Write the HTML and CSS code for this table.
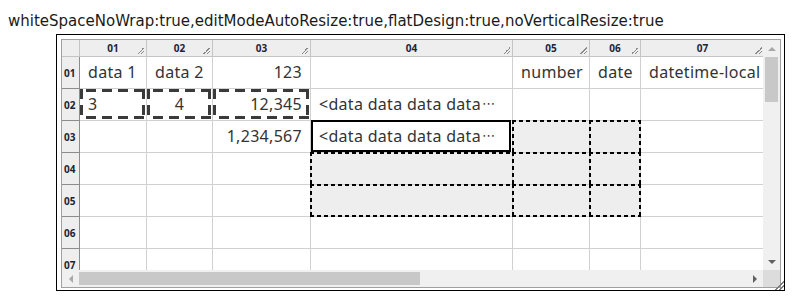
FILE: index.html
```html
<!DOCTYPE html>
<html>
<head>
<meta charset="utf-8">
<link rel="stylesheet" href="styles.css">
</head>
<body>
<div class="title">whiteSpaceNoWrap:true,editModeAutoResize:true,flatDesign:true,noVerticalResize:true</div>
<div class="frame">
  <div class="gridbox">
    <div class="top">
      <div class="viewport">
        <div class="sheet">
          <div class="ch"></div>
          <div class="ch grip">01</div>
          <div class="ch grip">02</div>
          <div class="ch grip">03</div>
          <div class="ch grip">04</div>
          <div class="ch grip">05</div>
          <div class="ch grip">06</div>
          <div class="ch grip">07</div>

          <div class="rh">01</div>
          <div class="c">data 1</div>
          <div class="c">data 2</div>
          <div class="c r">123</div>
          <div class="c"></div>
          <div class="c">number</div>
          <div class="c">date</div>
          <div class="c">datetime-local</div>

          <div class="rh">02</div>
          <div class="c copy">3</div>
          <div class="c m copy">4</div>
          <div class="c r copy">12,345</div>
          <div class="c">&lt;data data data data<span class="ell">⋯</span></div>
          <div class="c"></div>
          <div class="c"></div>
          <div class="c"></div>

          <div class="rh">03</div>
          <div class="c"></div>
          <div class="c"></div>
          <div class="c r">1,234,567</div>
          <div class="c active">&lt;data data data data<span class="ell">⋯</span></div>
          <div class="c sel"></div>
          <div class="c sel er"></div>
          <div class="c"></div>

          <div class="rh">04</div>
          <div class="c"></div>
          <div class="c"></div>
          <div class="c"></div>
          <div class="c sel"></div>
          <div class="c sel"></div>
          <div class="c sel er"></div>
          <div class="c"></div>

          <div class="rh">05</div>
          <div class="c"></div>
          <div class="c"></div>
          <div class="c"></div>
          <div class="c sel eb"></div>
          <div class="c sel eb"></div>
          <div class="c sel eb er"></div>
          <div class="c"></div>

          <div class="rh">06</div>
          <div class="c"></div>
          <div class="c"></div>
          <div class="c"></div>
          <div class="c"></div>
          <div class="c"></div>
          <div class="c"></div>
          <div class="c"></div>

          <div class="rh">07</div>
          <div class="c"></div>
          <div class="c"></div>
          <div class="c"></div>
          <div class="c"></div>
          <div class="c"></div>
          <div class="c"></div>
          <div class="c"></div>
        </div>
      </div>
      <div class="vscroll">
        <div class="btn"><span class="arrow up"></span></div>
        <div class="vtrack"><div class="vthumb"></div></div>
        <div class="btn"><span class="arrow down"></span></div>
      </div>
    </div>
    <div class="bottom">
      <div class="hscroll">
        <div class="btn"><span class="arrow left"></span></div>
        <div class="htrack"><div class="hthumb"></div></div>
        <div class="btn"><span class="arrow right"></span></div>
      </div>
      <div class="corner"></div>
    </div>
  </div>
</div>
</body>
</html>
```

FILE: styles.css
```css
body {
  margin: 8px;
  font-family: "Noto Sans", "Open Sans", sans-serif;
  color: #222;
}

.title {
  font-family: "DejaVu Sans", sans-serif;
  font-size: 15px;
  line-height: 26px;
  white-space: nowrap;
  color: #1a1a1a;
}

.frame {
  position: relative;
  margin-left: 48px;
  width: 720px;
  border: 1px solid #000;
  padding: 4px 3px 2px 4px;
  overflow: hidden;
}

.frame::after {
  content: "";
  position: absolute;
  right: 0;
  bottom: 0;
  width: 9px;
  height: 9px;
  background: linear-gradient(135deg, transparent 0 48%, #7a7a7a 48% 56%, transparent 56% 72%, #7a7a7a 72% 80%, transparent 80%);
}

.gridbox {
  border: 1px solid #a0a0a0;
  height: 247px;
  display: flex;
  flex-direction: column;
}

.top {
  display: flex;
  flex: 1;
  min-height: 0;
}

.viewport {
  flex: 1;
  min-width: 0;
  overflow: hidden;
}

.sheet {
  display: grid;
  grid-template-columns: 18px 67px 66px 98px 202px 77px 51px 124px;
  grid-template-rows: 17px repeat(7, 32px);
  width: max-content;
}

.ch {
  position: relative;
  box-sizing: border-box;
  background: #eeeeee;
  border-right: 1px solid #c4c4c4;
  border-bottom: 1px solid #c4c4c4;
  font-size: 10px;
  font-weight: bold;
  color: #1c2537;
  display: flex;
  align-items: center;
  justify-content: center;
  line-height: 1;
}

.grip::after {
  content: "";
  position: absolute;
  right: 2px;
  bottom: 2px;
  width: 7px;
  height: 7px;
  background: linear-gradient(135deg, transparent 0 50%, #8a8a8a 50% 58%, transparent 58% 75%, #8a8a8a 75% 83%, transparent 83%);
}

.rh {
  box-sizing: border-box;
  background: #eeeeee;
  border-right: 1px solid #8c8c8c;
  border-bottom: 1px solid #8c8c8c;
  font-size: 10px;
  font-weight: bold;
  color: #1c2537;
  display: flex;
  align-items: center;
  padding-left: 2px;
  padding-top: 1px;
}

.c {
  position: relative;
  box-sizing: border-box;
  border-right: 1px solid #d0d0d0;
  border-bottom: 1px solid #d0d0d0;
  padding: 0 8px 2px;
  display: flex;
  align-items: center;
  font-size: 16px;
  letter-spacing: 0.3px;
  color: #333;
  white-space: nowrap;
  min-width: 0;
}

.r { justify-content: flex-end; }
.m { justify-content: center; }

.ell {
  font-family: "DejaVu Sans", sans-serif;
  font-size: 13px;
  margin-left: 1px;
}

.copy::before {
  content: "";
  position: absolute;
  top: 0;
  left: 0;
  right: 1px;
  bottom: 1px;
  background:
    repeating-linear-gradient(90deg, transparent 0 6px, #3a3a3a 6px 16px) top left / 100% 3px no-repeat,
    repeating-linear-gradient(90deg, transparent 0 6px, #3a3a3a 6px 16px) bottom left / 100% 3px no-repeat,
    repeating-linear-gradient(180deg, #3a3a3a 0 10px, transparent 10px 16px) top left / 3px 100% no-repeat,
    repeating-linear-gradient(180deg, #3a3a3a 0 10px, transparent 10px 16px) top right / 3px 100% no-repeat;
}

.sel {
  background: #eeeeee;
  --b: 0px;
  --r: 0px;
}
.eb { --b: 2px; }
.er { --r: 2px; }

.sel::before,
.sel::after {
  content: "";
  position: absolute;
  top: -1px;
  left: -1px;
  right: -1px;
  bottom: -1px;
}

.sel::before {
  background:
    repeating-linear-gradient(90deg, #000 0 4px, transparent 4px 7px) top left / 100% 2px no-repeat,
    repeating-linear-gradient(180deg, #000 0 4px, transparent 4px 7px) top left / 2px 100% no-repeat;
}

.sel::after {
  background:
    repeating-linear-gradient(90deg, #000 0 4px, transparent 4px 7px) bottom left / 100% var(--b) no-repeat,
    repeating-linear-gradient(180deg, #000 0 4px, transparent 4px 7px) top right / var(--r) 100% no-repeat;
}

.active::before {
  content: "";
  position: absolute;
  top: -1px;
  left: 0;
  right: 1px;
  bottom: 0;
  border: 2px solid #000;
}

.vscroll {
  width: 17px;
  background: #f0f0f0;
  display: flex;
  flex-direction: column;
}

.btn {
  width: 17px;
  height: 17px;
  flex: none;
  display: flex;
  align-items: center;
  justify-content: center;
}

.vtrack {
  flex: 1;
}

.vthumb {
  margin: 0 2px;
  height: 45px;
  background: #c8c8c8;
}

.bottom {
  display: flex;
  height: 17px;
}

.hscroll {
  flex: 1;
  display: flex;
  background: #f0f0f0;
}

.htrack {
  flex: 1;
  display: flex;
  align-items: center;
}

.hthumb {
  width: 341px;
  height: 13px;
  background: #c8c8c8;
}

.corner {
  width: 17px;
  background: #dcdcdc;
}

.arrow {
  width: 0;
  height: 0;
}

.arrow.up {
  border-left: 4px solid transparent;
  border-right: 4px solid transparent;
  border-bottom: 4px solid #a8a8a8;
}

.arrow.down {
  border-left: 4px solid transparent;
  border-right: 4px solid transparent;
  border-top: 4px solid #606060;
}

.arrow.left {
  border-top: 4px solid transparent;
  border-bottom: 4px solid transparent;
  border-right: 4px solid #a8a8a8;
}

.arrow.right {
  border-top: 4px solid transparent;
  border-bottom: 4px solid transparent;
  border-left: 4px solid #606060;
}
```
